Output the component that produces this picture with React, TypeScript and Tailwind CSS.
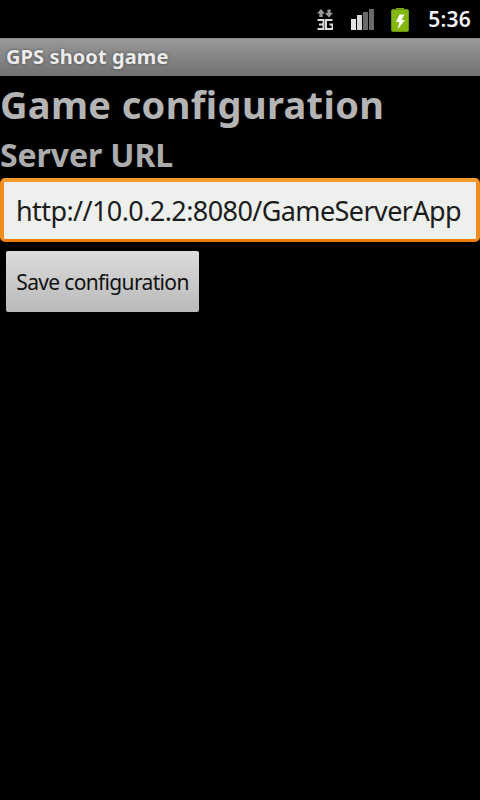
const font = "[font-family:'Noto_Sans','Open_Sans',sans-serif]";

function NetworkIcon() {
  return (
    <svg width="16" height="21" viewBox="0 0 16 21" className="block">
      <path d="M4 0 L8 4.5 H5.6 V8 H2.4 V4.5 H0 Z" fill="#9a9a9a" />
      <path d="M12 8.5 L8 4 H10.4 V0.5 H13.6 V4 H16 Z" fill="#9a9a9a" />
      <path d="M0.5 11 H6.5 V20 H0.5 M6.5 15.5 H2" fill="none" stroke="#dcdcdc" strokeWidth="2" />
      <path d="M15.5 11 H9 V20 H15.5 V15.5 H12.5" fill="none" stroke="#dcdcdc" strokeWidth="2" />
    </svg>
  );
}

function SignalIcon() {
  return (
    <div className="flex items-end gap-[1px] h-[21px]">
      <div className="w-[5px] h-[11px] bg-[#e4e4e4]" />
      <div className="w-[5px] h-[15px] bg-[#d8d8d8]" />
      <div className="w-[5px] h-[18px] bg-[#6a6a6a]" />
      <div className="w-[5px] h-[21px] bg-[#6a6a6a]" />
    </div>
  );
}

function BatteryIcon() {
  return (
    <svg width="18" height="24" viewBox="0 0 18 24" className="block">
      <rect x="5" y="0" width="8" height="3" fill="#7fa81a" />
      <rect x="0.5" y="1.5" width="17" height="22" rx="1.5" fill="#85b80f" stroke="#6b9412" />
      <path d="M8.5 6.5 H13.5 L10.5 12 H14 L6.5 21.5 L8.5 14 H5 Z" fill="#ffffff" />
    </svg>
  );
}

export default function App() {
  return (
    <div className={`w-[480px] h-[800px] bg-black overflow-hidden flex flex-col ${font}`}>
      <div className="h-[38px] flex items-center justify-end">
        <div className="mr-[18px]"><NetworkIcon /></div>
        <div className="mr-[17px] mt-[1px]"><SignalIcon /></div>
        <div className="mr-[19px] mt-[1px]"><BatteryIcon /></div>
        <span className="mr-[9px] text-[21px] font-semibold text-[#f2f2f2] leading-none tracking-[0.2px]">5:36</span>
      </div>
      <div className="h-[38px] flex items-center pl-[6px] bg-gradient-to-b from-[#9a9a9a] to-[#717171] shadow-[inset_0_1px_0_#8a8a8a]">
        <span className="text-[20px] font-bold text-[#ececec] leading-none pb-[1px] tracking-[0.1px] [text-shadow:0_0_3px_#444]">GPS shoot game</span>
      </div>
      <h1 className="mt-[5px] h-[46px] text-[38px] leading-[46px] font-bold text-[#b4b4b4] tracking-[0.35px] whitespace-nowrap">
        Game configuration
      </h1>
      <h2 className="mt-[12px] h-[32px] text-[32px] leading-[32px] font-bold text-[#acacac] tracking-[-0.1px] whitespace-nowrap">
        Server URL
      </h2>
      <div className="mt-[7px] h-[64px] rounded-[5px] border-[4px] border-b-[3px] border-t-[#f59a2c] border-x-[#f28c1e] border-b-[#ee7c10] bg-[#edf0ec] flex items-center pl-[12px] overflow-hidden">
        <span className="text-[27px] leading-none text-[#1c1c1c] tracking-[-0.59px] whitespace-nowrap">http://10.0.2.2:8080/GameServerApp</span>
      </div>
      <button className="mt-[9px] ml-[6px] w-[193px] h-[61px] rounded-[2px] bg-gradient-to-b from-[#dcdcdc] to-[#b9b9b9] flex items-center justify-center pt-[2px] text-[21px] leading-none text-[#111111] tracking-[-0.66px] whitespace-nowrap">
        Save configuration
      </button>
    </div>
  );
}
